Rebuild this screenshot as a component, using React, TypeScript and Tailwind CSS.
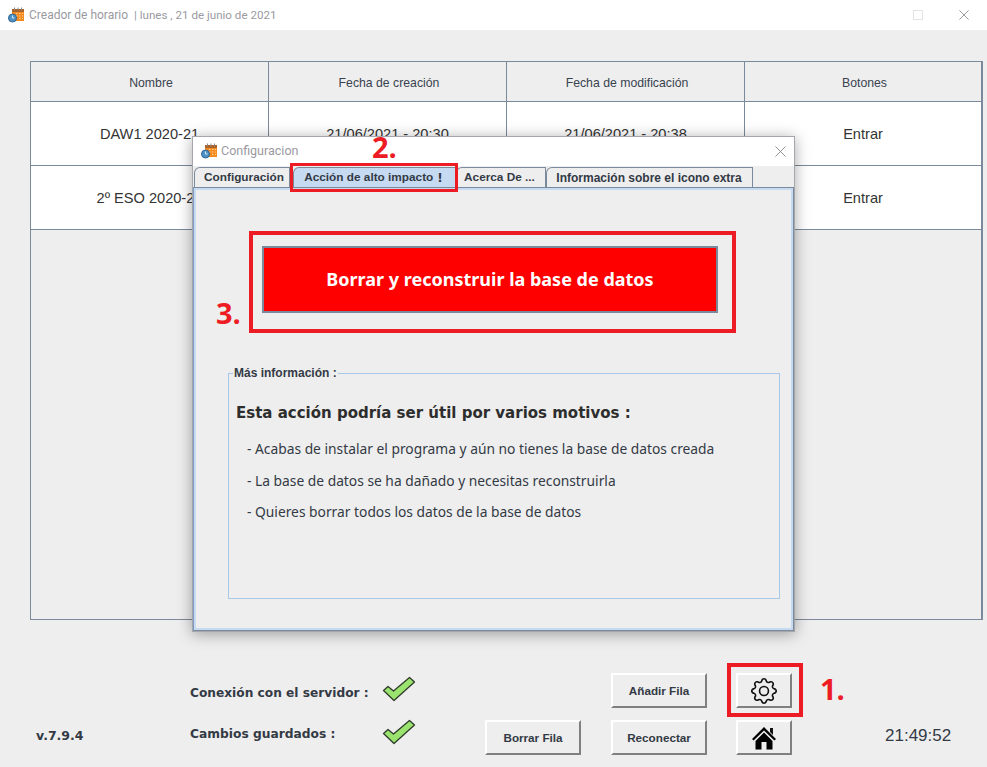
import { BsGear } from 'react-icons/bs';

const rows = [
  { name: 'DAW1 2020-21', created: '21/06/2021 - 20:30', modified: '21/06/2021 - 20:38' },
  { name: '2º ESO 2020-21', created: '21/06/2021 - 20:41', modified: '21/06/2021 - 20:44' },
];

const tabs = [
  { label: 'Configuración', width: 'w-[96px] pl-[4px] text-[11.8px]', active: false },
  { label: 'Acción de alto impacto', width: 'w-[163px] pr-[2px] text-[11.8px]', active: true },
  { label: 'Acerca De ...', width: 'w-[90px] pr-[3px] text-[11.8px]', active: false },
  { label: 'Información sobre el icono extra', width: 'w-[207px] pr-[1px] text-[12px]', active: false },
];

function AppIcon() {
  return (
    <svg width="16" height="16" viewBox="0 0 16 16" className="shrink-0">
      <rect x="4" y="2" width="12" height="12" fill="#f58a1f" />
      <rect x="4" y="2" width="12" height="3" fill="#a9622a" />
      <path d="M6.5 .5v3M10 .5v3M13.5 .5v3" stroke="#8a8a8a" strokeWidth="1" />
      <path d="M8 6.5h1.5M11 6.5h1.5M14 6.5h1M8 9h1.5M11 9h1.5M14 9h1M11 11.5h1.5M14 11.5h1" stroke="#ffcf96" strokeWidth="1" />
      <circle cx="4.5" cy="11" r="4" fill="#4f93c6" stroke="#2f6491" strokeWidth="1" />
      <path d="M4.5 8.5V11h2" stroke="#cfe6f5" strokeWidth="1" fill="none" />
    </svg>
  );
}

function CloseIcon({ size, color }: { size: number; color: string }) {
  return (
    <svg width={size} height={size} viewBox="0 0 12 12">
      <path d="M.5.5l11 11M11.5.5l-11 11" stroke={color} strokeWidth="1" />
    </svg>
  );
}

function Check() {
  return (
    <svg width="34" height="26" viewBox="0 0 34 26" className="ml-[-1px]">
      <path
        d="M1.5 14.5L6 10.5L11.5 15L27.5 1.5L32.5 6L12 24.5Z"
        fill="#9be36f"
        stroke="#2f3b2a"
        strokeWidth="1.3"
        strokeLinejoin="round"
      />
    </svg>
  );
}

function HomeIcon() {
  return (
    <svg width="26" height="26" viewBox="0 0 26 26">
      <path d="M19 3h3v7l-3-3z" fill="#111" />
      <path d="M13 2L1 14l1.6 1.6L13 5.4l10.4 10.2L25 14z" fill="#000" />
      <path d="M13 7.5L4.5 16v8.5H10.5V17h5v7.5h6V16z" fill="#000" />
    </svg>
  );
}

function JavaButton({ children, className }: { children: React.ReactNode; className: string }) {
  return (
    <button className={`h-[35px] flex items-center justify-center bg-[#eeeeee] border-2 border-t-white border-l-white border-b-[#808080] border-r-[#808080] font-['Liberation_Sans',sans-serif] font-bold text-[11.7px] text-[#333a45] ${className}`}>
      {children}
    </button>
  );
}

export default function App() {
  return (
    <div className="relative w-[987px] h-[767px] overflow-hidden bg-[#eeeeee] font-['Liberation_Sans',sans-serif]">
      {/* Window title */}
      <div className="h-[30px] bg-white flex items-center pl-[8px] pr-[18px]">
        <AppIcon />
        <span className="ml-[5px] font-['Roboto',sans-serif] text-[12px] text-[#9a9a9f] whitespace-pre">
          Creador de horario  <span className="text-[11.6px]">| lunes , 21 de junio de 2021</span>
        </span>
        <div className="ml-auto flex items-center gap-[36px]">
          <div className="w-[10px] h-[10px] border border-[#e3e3e3]" />
          <CloseIcon size={10} color="#888" />
        </div>
      </div>

      {/* Table */}
      <div className="mt-[31px] ml-[30px] mr-[4px] h-[559px] border-t border-l border-b border-r-2 border-[#7b8a9a]">
        <div className="grid grid-cols-[238px_238px_238px_1fr] h-[40px] border-b border-[#7b8a9a] text-[12.25px] text-[#39424e]">
          {['Nombre', 'Fecha de creación', 'Fecha de modificación', 'Botones'].map((h, i) => (
            <div key={h} className={`flex items-center justify-center pt-[3px] pl-[3px] ${i < 3 ? 'border-r border-[#7b8a9a]' : ''}`}>
              {h}
            </div>
          ))}
        </div>
        {rows.map(r => (
          <div key={r.name} className="grid grid-cols-[238px_238px_238px_1fr] h-[64px] bg-white border-b border-[#7b8a9a] text-[14.6px] text-[#333]">
            <div className="flex items-center justify-center pt-[2px] border-r border-[#7b8a9a]">{r.name}</div>
            <div className="flex items-center justify-center pt-[2px] border-r border-[#7b8a9a]">{r.created}</div>
            <div className="flex items-center justify-center pt-[2px] border-r border-[#7b8a9a]">{r.modified}</div>
            <div className="flex items-center justify-center pt-[2px]">Entrar</div>
          </div>
        ))}
      </div>

      {/* Footer */}
      <div className="mt-[53px] ml-[36px] grid grid-cols-[154px_193px_102px_126px_125px_149px_1fr] grid-rows-[35px_35px] gap-y-[12px] items-center text-[#333a45]">
        <div />
        <div className="font-['DejaVu_Sans',sans-serif] font-bold text-[12.2px] mt-[5px]">Conexión con el servidor :</div>
        <div className="mt-[-3px]"><Check /></div>
        <div />
        <JavaButton className="w-[96px]">Añadir Fila</JavaButton>
        <JavaButton className="w-[56px]">
          <BsGear size={26} color="#111" />
        </JavaButton>
        <div />

        <div className="font-['DejaVu_Sans',sans-serif] font-bold text-[12.5px] mt-[-3px]">v.7.9.4</div>
        <div className="font-['DejaVu_Sans',sans-serif] font-bold text-[12.25px] mt-[-6px]">Cambios guardados :</div>
        <div className="mt-[-12px]"><Check /></div>
        <JavaButton className="w-[96px]">Borrar Fila</JavaButton>
        <JavaButton className="w-[96px]">Reconectar</JavaButton>
        <JavaButton className="w-[56px]"><HomeIcon /></JavaButton>
        <div className="text-[17px] text-[#333a45] mt-[-4px]">21:49:52</div>
      </div>

      {/* Configuration dialog */}
      <div className="absolute left-[192px] top-[136px] w-[603px] h-[496px] flex flex-col bg-[#eeeeee] border border-[#a4a8ad] shadow-[0_2px_14px_rgba(0,0,0,0.35)]">
        <div className="h-[29px] shrink-0 bg-white flex items-center pl-[8px] pr-[8px] pb-[1px]">
          <AppIcon />
          <span className="ml-[4px] font-['Roboto',sans-serif] text-[12.5px] text-[#9a9a9f]">Configuracion</span>
          <div className="ml-auto mr-[0px]"><CloseIcon size={11} color="#8a8a8a" /></div>
        </div>
        <div className="flex items-end h-[21px] shrink-0 pl-[1px]">
          {tabs.map(t => (
            <div
              key={t.label}
              className={`${t.width} h-[20px] flex items-center justify-center border-t border-r border-l border-[#7b8a9a] rounded-tl-[6px] font-bold text-[#333a45] whitespace-nowrap ${t.active ? 'bg-[#c6daf1] ml-[3px]' : 'bg-[#eeeeee]'}`}
            >
              {t.label}
              {t.active && <span className="ml-[4px] font-['DejaVu_Sans',sans-serif] font-bold text-[12px] leading-none">!</span>}
            </div>
          ))}
        </div>
        <div className="flex-1 border border-[#7b8a9a] border-l-[#7e9ac4]">
          <div className="h-full border-2 border-[#c6daf1] pt-[56px] px-[66px]">
            <button className="block w-[456px] h-[67px] bg-[#ff0000] border-2 border-[#7b8a9a] font-['Noto_Sans',sans-serif] font-bold text-[18px] text-white">
              Borrar y reconstruir la base de datos
            </button>
            <fieldset className="relative mt-[53px] ml-[-34px] w-[552px] h-[233px] border border-[#a9c8e8] pl-[7px] pr-[7px]">
              <legend className="ml-[-3px] px-[1px] text-[12px] font-bold leading-[14px] text-[#333a45]">Más información :</legend>
              <h2 className="mt-[22px] font-['DejaVu_Sans',sans-serif] font-bold text-[15px] leading-[22px] text-[#2d2d2d]">
                Esta acción podría ser útil por varios motivos :
              </h2>
              <div className="mt-[15px] pl-[11px] flex flex-col gap-[11.5px] font-['Noto_Sans',sans-serif] text-[13.8px] leading-[20px] text-[#333a45]">
                <p>- Acabas de instalar el programa y aún no tienes la base de datos creada</p>
                <p>- La base de datos se ha dañado y necesitas reconstruirla</p>
                <p>- Quieres borrar todos los datos de la base de datos</p>
              </div>
            </fieldset>
          </div>
        </div>
      </div>

      {/* Red annotations */}
      <div className="absolute left-[727px] top-[663px] w-[76px] h-[54px] border-4 border-[#ed1c24]" />
      <div className="absolute left-[290px] top-[163px] w-[168px] h-[29px] border-[3px] border-[#ed1c24]" />
      <div className="absolute left-[249px] top-[231px] w-[487px] h-[102px] border-4 border-[#ed1c24]" />
      <span className="absolute left-[820px] top-[670px] font-['Open_Sans',sans-serif] font-bold text-[29px] leading-[38px] text-[#ed1c24]">1.</span>
      <span className="absolute left-[372px] top-[128px] font-['Open_Sans',sans-serif] font-bold text-[29px] leading-[38px] text-[#ed1c24]">2.</span>
      <span className="absolute left-[216px] top-[294px] font-['Open_Sans',sans-serif] font-bold text-[29px] leading-[38px] text-[#ed1c24]">3.</span>
    </div>
  );
}
